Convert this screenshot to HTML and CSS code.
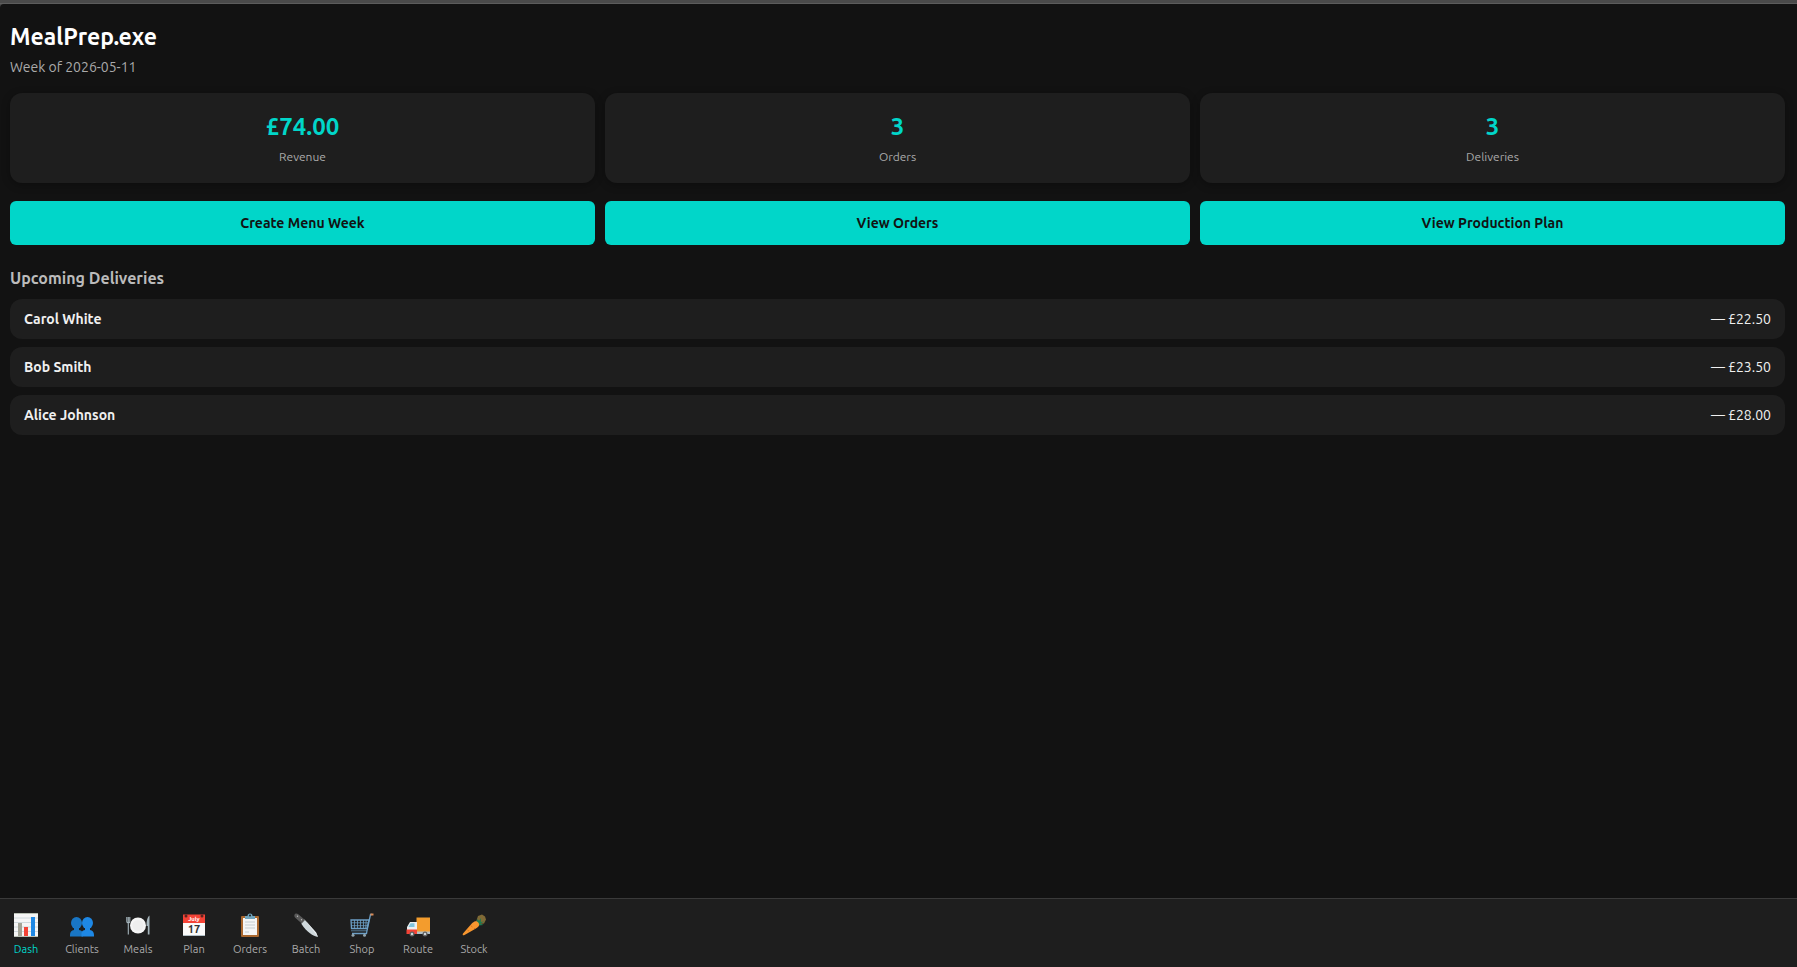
FILE: index.html
```
<!DOCTYPE html>
<html lang="en">
<head>
    <meta charset="UTF-8">
    <meta name="viewport" content="width=device-width, initial-scale=1.0">
    <title>MealPrep.exe</title>
    <link rel="stylesheet" href="styles.css">
</head>
<body>
    <div class="window-edge"></div>
    <div class="app">
        <main class="content">
            <header class="page-header">
                <h1>MealPrep.exe</h1>
                <p class="week">Week of 2026-05-11</p>
            </header>

            <section class="stats">
                <div class="stat-card">
                    <div class="stat-value">£74.00</div>
                    <div class="stat-label">Revenue</div>
                </div>
                <div class="stat-card">
                    <div class="stat-value">3</div>
                    <div class="stat-label">Orders</div>
                </div>
                <div class="stat-card">
                    <div class="stat-value">3</div>
                    <div class="stat-label">Deliveries</div>
                </div>
            </section>

            <div class="actions">
                <button type="button">Create Menu Week</button>
                <button type="button">View Orders</button>
                <button type="button">View Production Plan</button>
            </div>

            <section>
                <h2>Upcoming Deliveries</h2>
                <ul class="deliveries">
                    <li><strong>Carol White</strong><span>— £22.50</span></li>
                    <li><strong>Bob Smith</strong><span>— £23.50</span></li>
                    <li><strong>Alice Johnson</strong><span>— £28.00</span></li>
                </ul>
            </section>
        </main>

        <nav class="bottom-nav">
            <a href="#dash" class="active">
                <!-- bar chart -->
                <svg viewBox="0 0 24 24" aria-hidden="true">
                    <rect width="24" height="24" fill="#f5f5f5"/>
                    <path d="M0 5h24M0 9.500h24M0 14h24M0 18.500h24" stroke="#cfd8dc" stroke-width="1"/>
                    <path d="M0 .5h24M0 23.500h24" stroke="#b8bfb4" stroke-width="1"/>
                    <rect x="4" y="10" width="4" height="13" fill="#a3a396"/>
                    <rect x="10" y="14" width="4" height="9" fill="#f44336"/>
                    <rect x="17" y="4" width="4" height="19" fill="#1e88e5"/>
                </svg>
                <span>Dash</span>
            </a>
            <a href="#clients">
                <!-- two people -->
                <svg viewBox="0 0 24 24" aria-hidden="true">
                    <g fill="#1976c5">
                        <ellipse cx="6.500" cy="10" rx="5.500" ry="6"/>
                        <path d="M4 14h5v3c3 .5 4 2 4 5v1.500H0V22c0-3 1.500-4.500 4-5z"/>
                    </g>
                    <g fill="#1e88e5">
                        <ellipse cx="17.500" cy="10" rx="5.500" ry="6"/>
                        <path d="M15 14h5v3c2.500.5 4 2 4 5v1.500H11.500V22c0-3 .5-4.500 3.500-5z"/>
                    </g>
                </svg>
                <span>Clients</span>
            </a>
            <a href="#meals">
                <!-- plate with cutlery -->
                <svg viewBox="0 0 24 24" aria-hidden="true">
                    <circle cx="12" cy="12.500" r="8" fill="#f5f5f5"/>
                    <circle cx="12" cy="12.500" r="5.500" fill="#eeeeee"/>
                    <path d="M.8 4v4.500c0 1 .7 1.500 1.500 1.500s1.500-.5 1.500-1.500V4M2.300 4v17.500" fill="none" stroke="#a5b5bc" stroke-width="1.100"/>
                    <path d="M23.500 2.500v19h-1.700V13h-1.300c0-5 .8-9 3-10.500z" fill="#a5b5bc"/>
                </svg>
                <span>Meals</span>
            </a>
            <a href="#plan">
                <!-- calendar page -->
                <svg viewBox="0 0 24 24" aria-hidden="true">
                    <path d="M1 9h22v14H1z" fill="#fafafa"/>
                    <path d="M1 1.500h22V10H1z" fill="#f44336"/>
                    <path d="M1 22.500h22" stroke="#b0bec5" stroke-width="1"/>
                    <circle cx="4" cy="3" r="1.500" fill="#5d2420"/>
                    <circle cx="20" cy="3" r="1.500" fill="#5d2420"/>
                    <text x="12" y="7.800" class="cal-month">July</text>
                    <text x="12" y="20" class="cal-day">17</text>
                </svg>
                <span>Plan</span>
            </a>
            <a href="#orders">
                <!-- clipboard -->
                <svg viewBox="0 0 24 24" aria-hidden="true">
                    <rect x="3" y="3" width="18" height="21" rx="1" fill="#a9672e"/>
                    <path d="M5 5h14v17H5z" fill="#f5f5f5"/>
                    <path d="M7 5V3h2.500a2.500 2.500 0 0 1 5 0H17v3H7z" fill="#6fa4bd"/>
                    <circle cx="12" cy="2.500" r="1" fill="#1e1e1e"/>
                    <path d="M7 9h10M7 12h10M7 15h10M7 19h4" stroke="#c5cdd1" stroke-width="1"/>
                </svg>
                <span>Orders</span>
            </a>
            <a href="#batch">
                <!-- kitchen knife -->
                <svg viewBox="0 0 24 24" aria-hidden="true">
                    <path d="M7.500 8.500l3-2L22 19.500l2 4.500c-5-1-11-4.500-16.500-13z" fill="#cfd8dc"/>
                    <path d="M10.500 6.500L22 19.500l2 4.500z" fill="#eceff1"/>
                    <path d="M.5 1.800C1 .5 2.500 0 4 1l7 6-3.300 3.500L1 4.500C.3 3.800.2 2.500.5 1.800z" fill="#5a5a5a"/>
                    <circle cx="3.500" cy="3.300" r=".7" fill="#bdbdbd"/>
                    <circle cx="7.500" cy="6.800" r=".7" fill="#bdbdbd"/>
                </svg>
                <span>Batch</span>
            </a>
            <a href="#shop">
                <!-- shopping cart -->
                <svg viewBox="0 0 24 24" aria-hidden="true">
                    <g fill="none" stroke="#6c9fc6">
                        <path d="M22 1.500h-1.500L17 17.500l-.5 3H2" stroke-width="1.300"/>
                        <path d="M1 7h18l-2 8.500H1.500z" stroke-width="1.300"/>
                        <path d="M1 9.800h17.500M1 12.700h17M4.500 7v8.500M7.500 7v8.500M10.500 7v8.500M13.500 7v8.500M16.200 7l-.5 8.500" stroke-width=".8"/>
                        <path d="M1 17.800h16" stroke-width=".7"/>
                    </g>
                    <path d="M20.500 1.500h3" stroke="#d98b57" stroke-width="2"/>
                    <circle cx="3" cy="22.300" r="1.500" fill="#90a4ae"/>
                    <circle cx="14.500" cy="22.300" r="1.500" fill="#90a4ae"/>
                </svg>
                <span>Shop</span>
            </a>
            <a href="#route">
                <!-- delivery truck -->
                <svg viewBox="0 0 24 24" aria-hidden="true">
                    <path d="M10.500 4.500H24V20H10.500z" fill="#f39c2d"/>
                    <path d="M4 9h7v9H1v-4z" fill="#eceff1"/>
                    <path d="M4.500 10.200h4V14H2.500z" fill="#80c5df"/>
                    <path d="M.5 16.500H11V21H.5z" fill="#f44336"/>
                    <path d="M11 18.500h13V21H11z" fill="#b0bec5"/>
                    <circle cx="6" cy="21" r="2.500" fill="#616161"/>
                    <circle cx="19" cy="21" r="2.500" fill="#616161"/>
                    <circle cx="6" cy="21" r="1.200" fill="#cfd8dc"/>
                    <circle cx="19" cy="21" r="1.200" fill="#cfd8dc"/>
                </svg>
                <span>Route</span>
            </a>
            <a href="#stock">
                <!-- carrot -->
                <svg viewBox="0 0 24 24" aria-hidden="true">
                    <path d="M14 9l2-6 4-1.500 3 2 1 3-2 4-5 .5z" fill="#806a36"/>
                    <path d="M14.500 8.500l1-2.500 1.500 2 2-3-.2 4 3.200-.5-3.500 2 3 1.500-5 .5z" fill="#1f7a50"/>
                    <path d="M12.500 8.500c2-1 5.500 1.500 4.500 4-.5 1.500-2 2.200-3.500 3.200L2.500 22c-1.500.8-2.300 0-1.500-1.500l7-8c1.500-1.700 3-3.300 4.500-4z" fill="#f7962f"/>
                    <path d="M8.500 12.500l2 1.500M5.500 17l1.500 1M12 15l1 1" stroke="#d46c16" stroke-width=".8"/>
                </svg>
                <span>Stock</span>
            </a>
        </nav>
    </div>
</body>
</html>
```
FILE: styles.css
```
* {
    box-sizing: border-box;
}
body {
    font-family: Ubuntu, "Noto Sans", sans-serif;
    font-size: 14px;
    background-color: #4a4a4a;
    color: #f0f0f0;
    margin: 0;
    min-height: 100vh;
    display: flex;
    flex-direction: column;
}
.window-edge {
    height: 4px;
    border-bottom: 1px solid #5c5c5c;
}
.app {
    flex: 1;
    display: flex;
    flex-direction: column;
    background-color: #121212;
    border-top-left-radius: 4px;
}
.content {
    flex: 1;
    padding: 18px 12px 18px 10px;
}
h1 {
    margin: 0;
    font-size: 23px;
    line-height: 30px;
    font-weight: 600;
    color: #fff;
}
.week {
    margin: 6px 0 16px;
    font-size: 14px;
    line-height: 19px;
    color: #aaa;
}
.stats, .actions {
    display: grid;
    grid-template-columns: repeat(3, 1fr);
    gap: 10px;
}
.stat-card {
    padding: 19px 18px 17px;
    background-color: #1e1e1e;
    border-radius: 12px;
    text-align: center;
    box-shadow: 0 2px 8px rgba(0, 0, 0, 0.3);
}
.stat-value {
    font-size: 24px;
    line-height: 30px;
    font-weight: 700;
    color: #01d6c9;
}
.stat-label {
    margin-top: 6px;
    font-size: 12px;
    line-height: 18px;
    color: #aaa;
}
.actions {
    margin-top: 18px;
}
button {
    height: 44px;
    padding: 0 14px;
    border: none;
    border-radius: 6px;
    background-color: #01d6c9;
    color: #121212;
    font: inherit;
    font-weight: 600;
    cursor: pointer;
}
h2 {
    margin: 22px 0 10px;
    font-size: 16px;
    line-height: 22px;
    font-weight: 600;
    color: #bbb;
}
.deliveries {
    margin: 0;
    padding: 0;
    list-style: none;
    display: grid;
    gap: 8px;
}
.deliveries li {
    display: flex;
    justify-content: space-between;
    align-items: center;
    height: 40px;
    padding: 0 14px;
    background-color: #1e1e1e;
    border-radius: 12px;
}
.deliveries strong {
    font-weight: 600;
}
.bottom-nav {
    display: flex;
    gap: 4px;
    height: 69px;
    background-color: #1e1e1e;
    border-top: 1px solid #3a3a3a;
}
.bottom-nav a {
    width: 52px;
    padding-top: 14px;
    display: flex;
    flex-direction: column;
    align-items: center;
    gap: 4px;
    font-size: 11px;
    line-height: 16px;
    color: #aaa;
    text-decoration: none;
}
.bottom-nav a.active {
    color: #01d6c9;
}
.bottom-nav svg {
    width: 24px;
    height: 24px;
}
.cal-month {
    font-size: 6px;
    font-weight: 700;
    text-anchor: middle;
    fill: #fff;
}
.cal-day {
    font-size: 11px;
    font-weight: 700;
    text-anchor: middle;
    fill: #333;
}
```
